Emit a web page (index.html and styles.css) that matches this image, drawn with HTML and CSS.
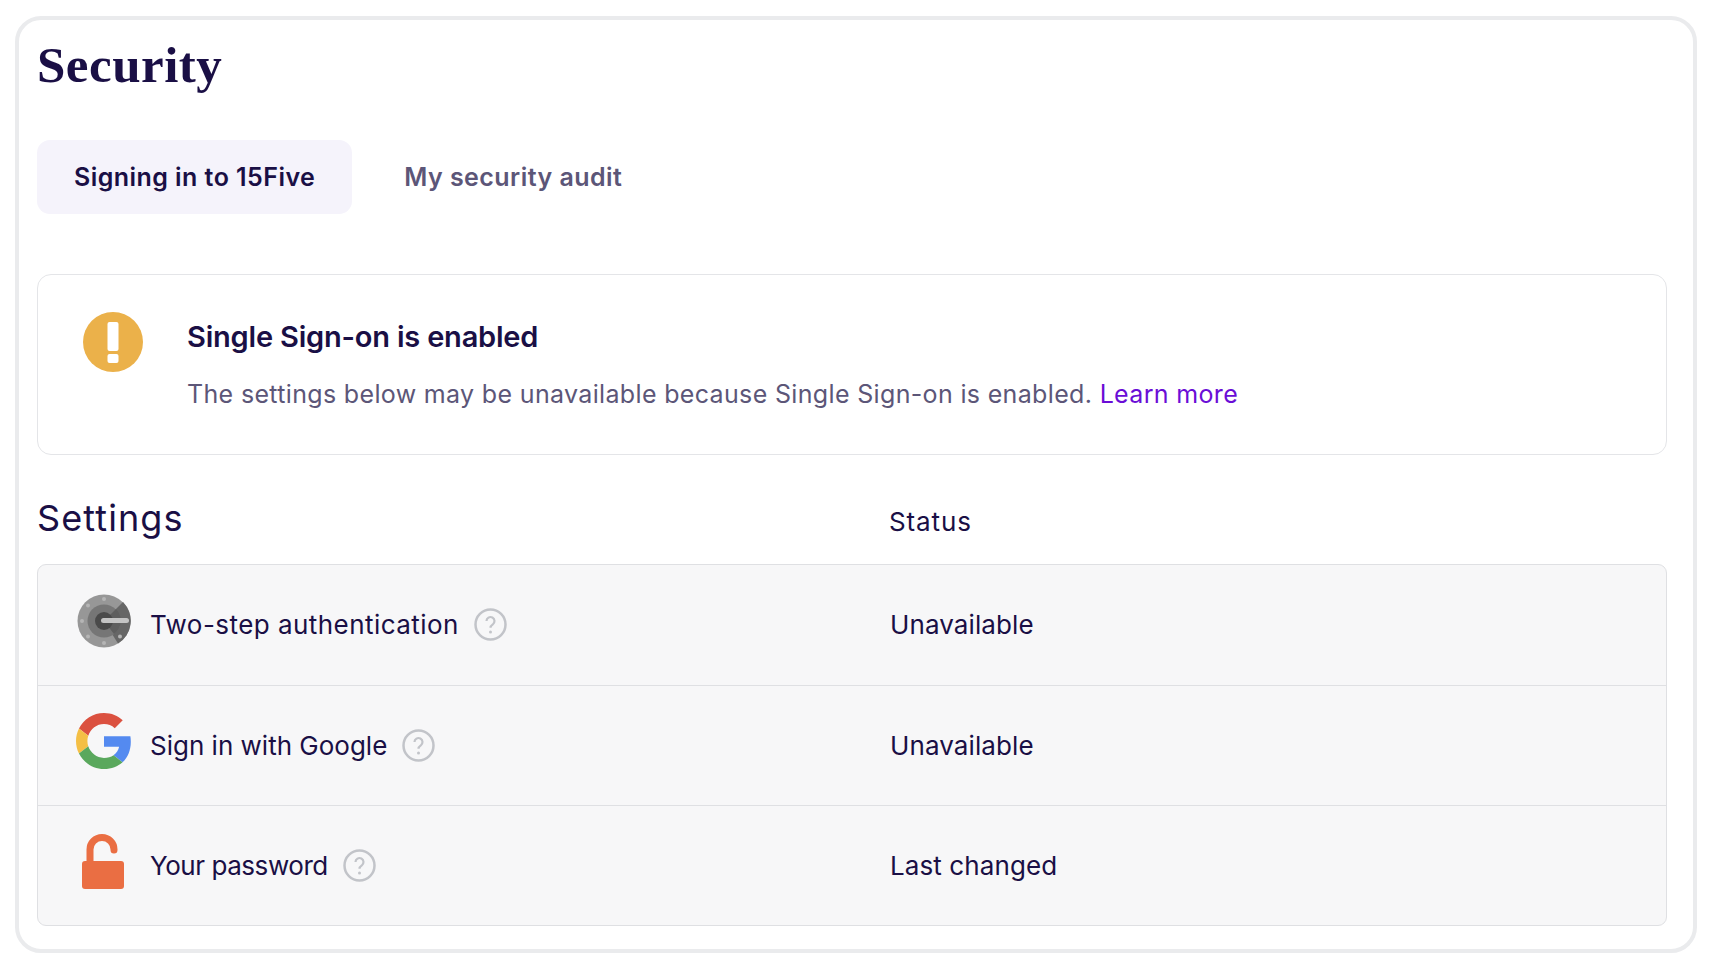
FILE: index.html
```html
<!DOCTYPE html>
<html lang="en">
<head>
<meta charset="utf-8">
<title>Security</title>
<link rel="stylesheet" href="styles.css">
</head>
<body>
<main class="card">
  <h1 class="title">Security</h1>
  <nav class="tabs">
    <a class="tab tab-active">Signing in to 15Five</a>
    <a class="tab">My security audit</a>
  </nav>
  <section class="alert">
    <svg class="alert-icon" viewBox="0 0 60 60"><circle cx="30" cy="30" r="30" fill="#ebb14a"/><rect x="24.5" y="10" width="11" height="29" rx="2" fill="#fff"/><rect x="24.5" y="42" width="11" height="9" rx="2" fill="#fff"/></svg>
    <div class="alert-body">
      <h2 class="alert-title">Single Sign-on is enabled</h2>
      <p class="alert-text">The settings below may be unavailable because Single Sign-on is enabled. <a class="link">Learn more</a></p>
    </div>
  </section>
  <div class="head">
    <h2 class="settings">Settings</h2>
    <div class="status-head">Status</div>
  </div>
  <div class="table">
    <div class="row">
      <div class="name">
        <svg class="icon icon-auth" viewBox="0 0 56 56"><circle cx="28" cy="28" r="26.5" fill="#979797"/><path d="M28 28 L47 9 A26.5 26.5 0 0 1 42 50.5 Z" fill="#666"/><circle cx="28" cy="28" r="16.5" fill="#767676"/><path d="M28 28 L40 16 A16.5 16.5 0 0 1 38 41 Z" fill="#5e5e5e"/><circle cx="28" cy="28" r="9" fill="#4a4a4a"/><rect x="25" y="25" width="28" height="5" rx="2.5" fill="#c4c4c4"/><g fill="#b5b5b5"><circle cx="28" cy="6" r="2"/><circle cx="12" cy="12.500" r="2"/><circle cx="6" cy="28" r="2"/><circle cx="12" cy="43.500" r="2"/><circle cx="28" cy="50" r="2"/><circle cx="44" cy="43.500" r="2"/></g></svg>
        <span class="label-wide">Two-step authentication</span>
        <svg class="help" viewBox="0 0 33 33"><circle cx="16.500" cy="16.500" r="15" fill="none" stroke="#c2c4c9" stroke-width="2.500"/><path d="M12.500 13a4 4 0 1 1 6.300 3.300c-1.500 1-2.300 1.800-2.300 3.400" fill="none" stroke="#c2c4c9" stroke-width="2.200"/><circle cx="16.500" cy="24" r="1.500" fill="#c2c4c9"/></svg>
      </div>
      <div class="status">Unavailable</div>
    </div>
    <div class="row">
      <div class="name">
        <svg class="icon icon-google" viewBox="0 0 48 48"><path fill="#db5140" d="M24 9.500c3.540 0 6.710 1.220 9.210 3.600l6.850-6.850C35.900 2.380 30.470 0 24 0 14.620 0 6.510 5.380 2.560 13.220l7.980 6.190C12.430 13.720 17.740 9.500 24 9.500z"/><path fill="#548af0" d="M46.980 24.550c0-1.570-.15-3.090-.38-4.550H24v9.020h12.940c-.58 2.960-2.260 5.480-4.780 7.180l7.730 6c4.510-4.180 7.090-10.360 7.090-17.650z"/><path fill="#f4bf45" d="M10.530 28.590c-.48-1.450-.76-2.990-.76-4.590s.27-3.140.76-4.590l-7.980-6.190C.92 16.460 0 20.120 0 24c0 3.880.92 7.540 2.560 10.780l7.970-6.190z"/><path fill="#5aa85d" d="M24 48c6.480 0 11.930-2.130 15.890-5.810l-7.730-6c-2.150 1.450-4.920 2.300-8.160 2.300-6.260 0-11.570-4.220-13.470-9.910l-7.980 6.190C6.510 42.620 14.620 48 24 48z"/></svg>
        <span class="label-plain">Sign in with Google</span>
        <svg class="help" viewBox="0 0 33 33"><circle cx="16.500" cy="16.500" r="15" fill="none" stroke="#c2c4c9" stroke-width="2.500"/><path d="M12.500 13a4 4 0 1 1 6.300 3.300c-1.500 1-2.300 1.800-2.300 3.400" fill="none" stroke="#c2c4c9" stroke-width="2.200"/><circle cx="16.500" cy="24" r="1.500" fill="#c2c4c9"/></svg>
      </div>
      <div class="status">Unavailable</div>
    </div>
    <div class="row">
      <div class="name">
        <svg class="icon icon-lock" viewBox="1 0 56 56"><path d="M15 30V16.500a12 12 0 0 1 24 0V17" fill="none" stroke="#ea6e43" stroke-width="7" stroke-linecap="round"/><rect x="7" y="28" width="42" height="28" rx="3" fill="#ea6e43"/></svg>
        <span class="label-narrow">Your password</span>
        <svg class="help" viewBox="0 0 33 33"><circle cx="16.500" cy="16.500" r="15" fill="none" stroke="#c2c4c9" stroke-width="2.500"/><path d="M12.500 13a4 4 0 1 1 6.300 3.300c-1.500 1-2.300 1.800-2.300 3.400" fill="none" stroke="#c2c4c9" stroke-width="2.200"/><circle cx="16.500" cy="24" r="1.500" fill="#c2c4c9"/></svg>
      </div>
      <div class="status">Last changed</div>
    </div>
  </div>
</main>
</body>
</html>
```
FILE: styles.css
```css
* { box-sizing: border-box; }
html, body { margin: 0; background: #fff; }
body {
  padding: 16px 15px 15px;
  font-family: "Inter", "Liberation Sans", sans-serif;
  color: #1a0f45;
}
.card {
  height: 937px;
  border: 4.5px solid #eaebed;
  border-radius: 26px;
  padding: 0 26px 0 18px;
  background: #fff;
}
.title {
  margin: 0;
  padding-top: 17px;
  height: 119.500px;
  font: 700 51px/56px "Liberation Serif", serif;
  letter-spacing: .5px;
}
.tabs { display: flex; gap: 15px; }
.tab {
  display: flex;
  align-items: center;
  height: 74px;
  padding: 0 37px;
  border-radius: 13px;
  font-size: 25px;
  font-weight: 600;
  letter-spacing: .45px;
  color: #5c5678;
}
.tab-active { background: #f5f3fb; color: #1a0f45; }
.alert {
  display: flex;
  margin-top: 60px;
  height: 181px;
  padding: 37px 45px;
  gap: 44px;
  border: 1.500px solid #e4e5e8;
  border-radius: 14px;
}
.alert-icon { width: 60px; height: 60px; flex: none; }
.alert-title { margin: 3.500px 0 0; font-size: 29px; line-height: 44px; font-weight: 600; letter-spacing: -.2px; }
.alert-text { margin: 14.500px 0 0; font-size: 25px; line-height: 40px; letter-spacing: .34px; color: #5c5678; }
.link { color: #6a0dd6; }
.head {
  display: grid;
  grid-template-columns: 852px 1fr;
  align-items: center;
  height: 109px;
  padding-top: 18px;
}
.settings { margin: 0; font-size: 36px; font-weight: 400; letter-spacing: 1.1px; }
.status-head { font-size: 26px; letter-spacing: .9px; padding-top: 6px; }
.table {
  border: 1.500px solid #dfe0e3;
  border-radius: 9px;
  background: #f7f7f8;
}
.row {
  display: grid;
  grid-template-columns: 852px 1fr;
  align-items: center;
  height: 120px;
  font-size: 26px;
  letter-spacing: .1px;
}
.row + .row { border-top: 1.500px solid #dfe0e3; }
.name { display: flex; align-items: center; padding-left: 38px; gap: 15px; }
.label-wide { letter-spacing: .45px; }
.label-plain { letter-spacing: 0; }
.label-narrow { letter-spacing: -.45px; }
.icon { width: 56px; height: 56px; flex: none; margin-right: 3px; }
.icon-auth { margin-top: -7px; }
.icon-google { margin-top: -8px; }
.icon-lock { margin-top: -9px; }
.help { width: 33px; height: 33px; flex: none; }
```
